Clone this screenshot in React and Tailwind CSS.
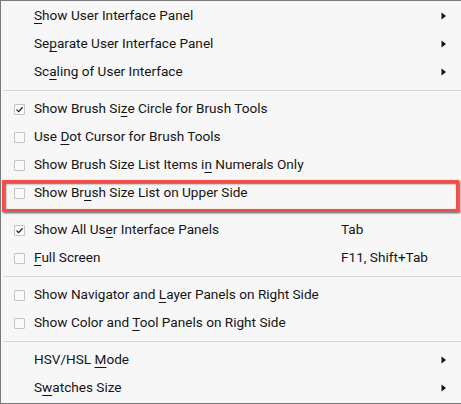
import React from "react";

const Check = ({ checked }) => (
  <div className="w-[11px] h-[11px] border border-[#c4c4c4] rounded-[1px] bg-[#fafafa] flex items-center justify-center">
    {checked && (
      <svg width="9" height="9" viewBox="0 0 9 9">
        <path d="M1.5 4.6 L3.6 6.6 L7.6 2.2" fill="none" stroke="#222" strokeWidth="1.3" />
      </svg>
    )}
  </div>
);

const Arrow = () => (
  <svg width="6" height="8" viewBox="0 0 6 8">
    <path d="M0.5 0.5 L5 4 L0.5 7.5 Z" fill="#111" />
  </svg>
);

const U = ({ children }) => (
  <span className="underline underline-offset-[3px] decoration-[1px]">{children}</span>
);

const Row = ({ check, checked, children, shortcut, sub }) => (
  <div className="h-[28px] flex items-center">
    <div className="w-[33px] pl-[13px] flex items-center">
      {check && <Check checked={checked} />}
    </div>
    <div className="w-[307px] whitespace-nowrap">{children}</div>
    <div className="w-[100px] whitespace-nowrap">{shortcut}</div>
    <div className="w-[8px] flex items-center">{sub && <Arrow />}</div>
  </div>
);

const Sep = () => (
  <div className="h-[9px] flex items-center pl-[2px]">
    <div className="h-px w-full bg-[#d6d6d6]" />
  </div>
);

export default function App() {
  return (
    <div
      className="relative w-[461px] h-[404px] bg-[#f7f7f7] border-t border-l border-b border-[#7a7a7a] pt-px text-[13.6px] text-[#151515] leading-none"
      style={{ fontFamily: 'Roboto, "Open Sans", sans-serif' }}
    >
      <Row sub><U>S</U>how User Interface Panel</Row>
      <Row sub>Se<U>p</U>arate User Interface Panel</Row>
      <Row sub>Sc<U>a</U>ling of User Interface</Row>
      <Sep />
      <Row check checked>Show Brush Si<U>z</U>e Circle for Brush Tools</Row>
      <Row check>Use <U>D</U>ot Cursor for Brush Tools</Row>
      <Row check>Show Brush Size List Items i<U>n</U> Numerals Only</Row>
      <Row check>Show Br<U>u</U>sh Size List on Upper Side</Row>
      <Sep />
      <Row check checked shortcut="Tab">Show All Us<U>e</U>r Interface Panels</Row>
      <Row check shortcut="F11, Shift+Tab"><U>F</U>ull Screen</Row>
      <Sep />
      <Row check>Show Navigator and <U>L</U>ayer Panels on Right Side</Row>
      <Row check>Show Color and <U>T</U>ool Panels on Right Side</Row>
      <Sep />
      <Row sub>HSV/HSL <U>M</U>ode</Row>
      <Row sub>S<U>w</U>atches Size</Row>

      <div className="absolute left-[1px] top-[179px] w-[457px] h-[32px] border-[3px] border-[#ef5049] shadow-[1px_1px_2px_rgba(0,0,0,0.65),inset_1px_1px_2px_rgba(0,0,0,0.6)]" />
    </div>
  );
}
